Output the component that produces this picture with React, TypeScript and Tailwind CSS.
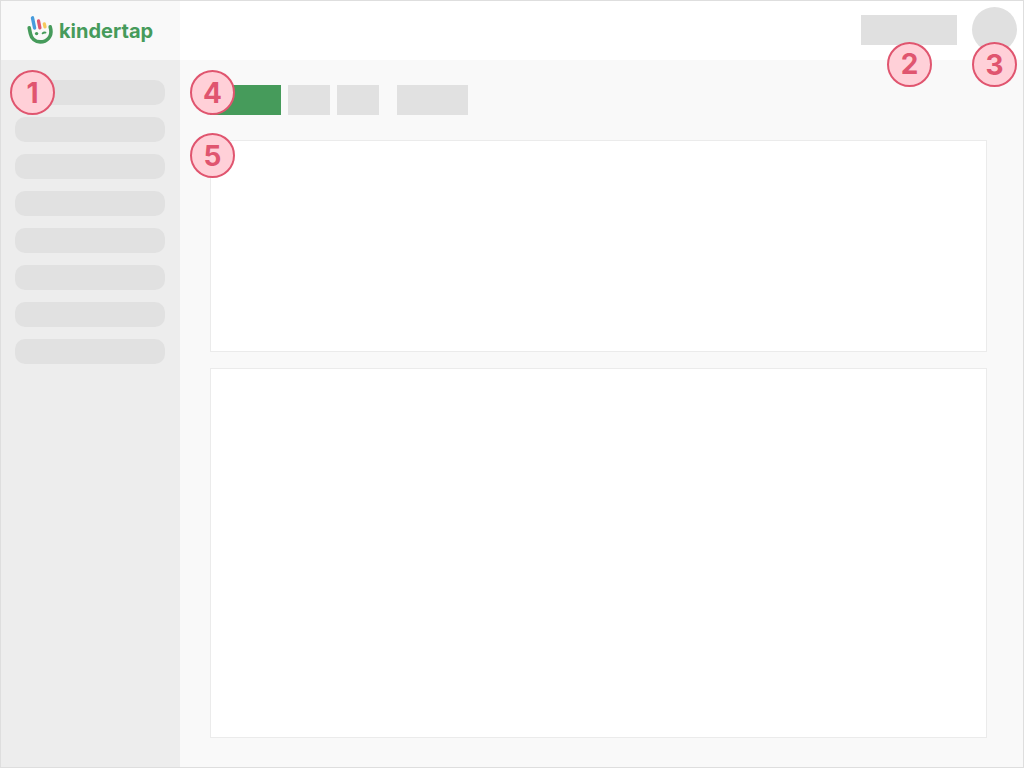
import { clsx } from 'clsx';

type BadgeProps = {
  value: number;
  className: string;
};

const menuItems = [
  'Menu item 1',
  'Menu item 2',
  'Menu item 3',
  'Menu item 4',
  'Menu item 5',
  'Menu item 6',
  'Menu item 7',
  'Menu item 8',
];

function Badge({ value, className }: BadgeProps) {
  return (
    <span
      className={clsx(
        'absolute z-10 flex h-[45px] w-[45px] items-center justify-center rounded-full border-2 border-[#e0556f] bg-[#ffd0d8] text-[28px] leading-none font-bold text-[#e0556f]',
        className
      )}
    >
      {value}
    </span>
  );
}

function Logo() {
  return (
    <a href="#" className="flex h-[59px] items-center bg-[#f9f9f9] pl-[25px]">
      <svg className="mb-px" width="28" height="30" viewBox="26 15 28 30" fill="none" strokeLinecap="round" aria-hidden="true">
        <path d="M29.2 27.8 L30.4 33.6 C31.4 38.8 35.4 41.9 40.2 41.9 C47.2 41.9 51.9 36.4 50.8 29.6 L50.2 26.8" stroke="#469b5b" strokeWidth="3.6" />
        <path d="M32.5 17.8 L34.6 28" stroke="#479bdc" strokeWidth="3.4" />
        <path d="M38.5 20.9 L39.9 27.8" stroke="#e0556f" strokeWidth="3.3" />
        <path d="M44.3 23.9 L45 26.9" stroke="#f6c95c" strokeWidth="3.3" />
        <circle cx="36.6" cy="33.6" r="1.7" fill="#469b5b" />
        <path d="M42.6 33.4 C43.2 32.8 44.6 32.4 45.5 32.6" stroke="#469b5b" strokeWidth="1.8" />
      </svg>
      <span className="ml-[5px] font-['Inter',sans-serif] text-[20px] leading-6 font-bold text-[#469b5b]">
        kindertap
      </span>
    </a>
  );
}

export default function App() {
  return (
    <div className="flex min-h-screen border border-[#dedede] bg-[#f9f9f9] font-['Inter','Liberation_Sans',sans-serif]">
      <aside className="w-[179px] shrink-0 bg-[#ededed]">
        <Logo />
        <nav className="relative flex flex-col gap-3 px-[14px] pt-5">
          {menuItems.map((item) => (
            <a key={item} href="#" aria-label={item} className="mr-px h-[25px] rounded-[10px] bg-[#e1e1e1]" />
          ))}
          <Badge value={1} className="top-[10px] left-[9px]" />
        </nav>
      </aside>

      <div className="flex min-w-0 flex-1 flex-col">
        <header className="flex h-[59px] items-center justify-end gap-[15px] bg-white pr-[6px] pb-[2px]">
          <div className="relative">
            <button aria-label="Select account" className="block h-[30px] w-24 bg-[#e0e0e0]" />
            <Badge value={2} className="top-[27px] left-[26px]" />
          </div>
          <div className="relative">
            <button aria-label="Profile" className="block h-[45px] w-[45px] rounded-full bg-[#e0e0e0]" />
            <Badge value={3} className="top-[35px] left-0" />
          </div>
        </header>

        <main className="flex flex-1 flex-col pt-[25px] pr-9 pb-[29px] pl-[30px]">
          <div className="relative flex gap-[7px]">
            <button aria-label="Primary action" className="h-[30px] w-[71px] bg-[#469b5b]" />
            <button aria-label="Previous" className="h-[30px] w-[42px] bg-[#e1e1e1]" />
            <button aria-label="Next" className="h-[30px] w-[42px] bg-[#e1e1e1]" />
            <button aria-label="Filter" className="ml-[11px] h-[30px] w-[71px] bg-[#e1e1e1]" />
            <Badge value={4} className="-top-[15px] -left-5" />
          </div>

          <section className="relative mt-[25px] h-[212px] border border-[#ebebeb] bg-white">
            <Badge value={5} className="-top-2 -left-[21px]" />
          </section>
          <section className="mt-4 flex-1 border border-[#ebebeb] bg-white" />
        </main>
      </div>
    </div>
  );
}
